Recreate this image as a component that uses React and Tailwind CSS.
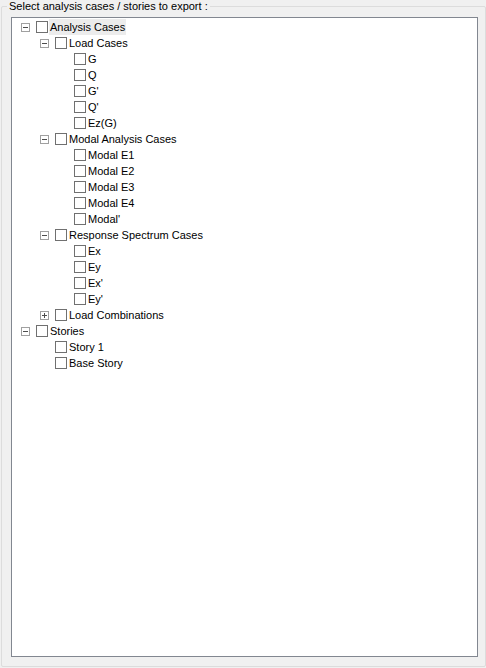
import React from 'react';

const tree = [
  {
    label: 'Analysis Cases',
    open: true,
    selected: true,
    children: [
      {
        label: 'Load Cases',
        open: true,
        children: [{ label: 'G' }, { label: 'Q' }, { label: "G'" }, { label: "Q'" }, { label: 'Ez(G)' }],
      },
      {
        label: 'Modal Analysis Cases',
        open: true,
        children: [
          { label: 'Modal E1' },
          { label: 'Modal E2' },
          { label: 'Modal E3' },
          { label: 'Modal E4' },
          { label: "Modal'" },
        ],
      },
      {
        label: 'Response Spectrum Cases',
        open: true,
        children: [{ label: 'Ex' }, { label: 'Ey' }, { label: "Ex'" }, { label: "Ey'" }],
      },
      { label: 'Load Combinations', open: false, children: [{ label: 'ULS' }] },
    ],
  },
  {
    label: 'Stories',
    open: true,
    children: [{ label: 'Story 1' }, { label: 'Base Story' }],
  },
];

// small +/- box of a win32 tree view
const Expander = ({ open }) => (
  <div className="relative w-[9px] h-[9px] border border-[#a0a0a0] bg-white">
    <div className="absolute left-[1px] top-[3px] w-[5px] h-[1px] bg-[#4d4d4d]" />
    {!open && <div className="absolute left-[3px] top-[1px] w-[1px] h-[5px] bg-[#4d4d4d]" />}
  </div>
);

const Row = ({ node, level }) => {
  const hasKids = node.children && node.children.length > 0;
  return (
    <>
      <div className="flex items-center h-[16px]">
        <div className="shrink-0" style={{ width: 9 + level * 19 }} />
        <div className="w-[9px] shrink-0">{hasKids && <Expander open={node.open} />}</div>
        <div className="ml-[6px] w-[12px] h-[12px] shrink-0 border border-[#707070] bg-white" />
        <span
          className={`ml-[1px] px-[1px] h-[16px] leading-[16px] whitespace-nowrap ${
            node.selected ? 'bg-[#ececec]' : ''
          }`}
        >
          {node.label}
        </span>
      </div>
      {hasKids && node.open && node.children.map((c) => <Row key={c.label} node={c} level={level + 1} />)}
    </>
  );
};

export default function App() {
  return (
    <div
      className="w-[486px] h-[668px] bg-[#f0f0f0] pt-[6px] pl-[1px] text-[11px] text-black"
      style={{ fontFamily: '"Liberation Sans", Arial, sans-serif' }}
    >
      <div className="relative w-[485px] h-[661px] border border-[#dcdcdc] rounded-[2px] pt-[10px] pl-[9px]">
        <div className="absolute left-[5px] top-[-8px] px-[2px] bg-[#f0f0f0] leading-[14px]">
          Select analysis cases / stories to export :
        </div>
        <div className="w-[467px] h-[640px] border border-[#828790] bg-white pt-[1px]">
          {tree.map((n) => (
            <Row key={n.label} node={n} level={0} />
          ))}
        </div>
      </div>
    </div>
  );
}
